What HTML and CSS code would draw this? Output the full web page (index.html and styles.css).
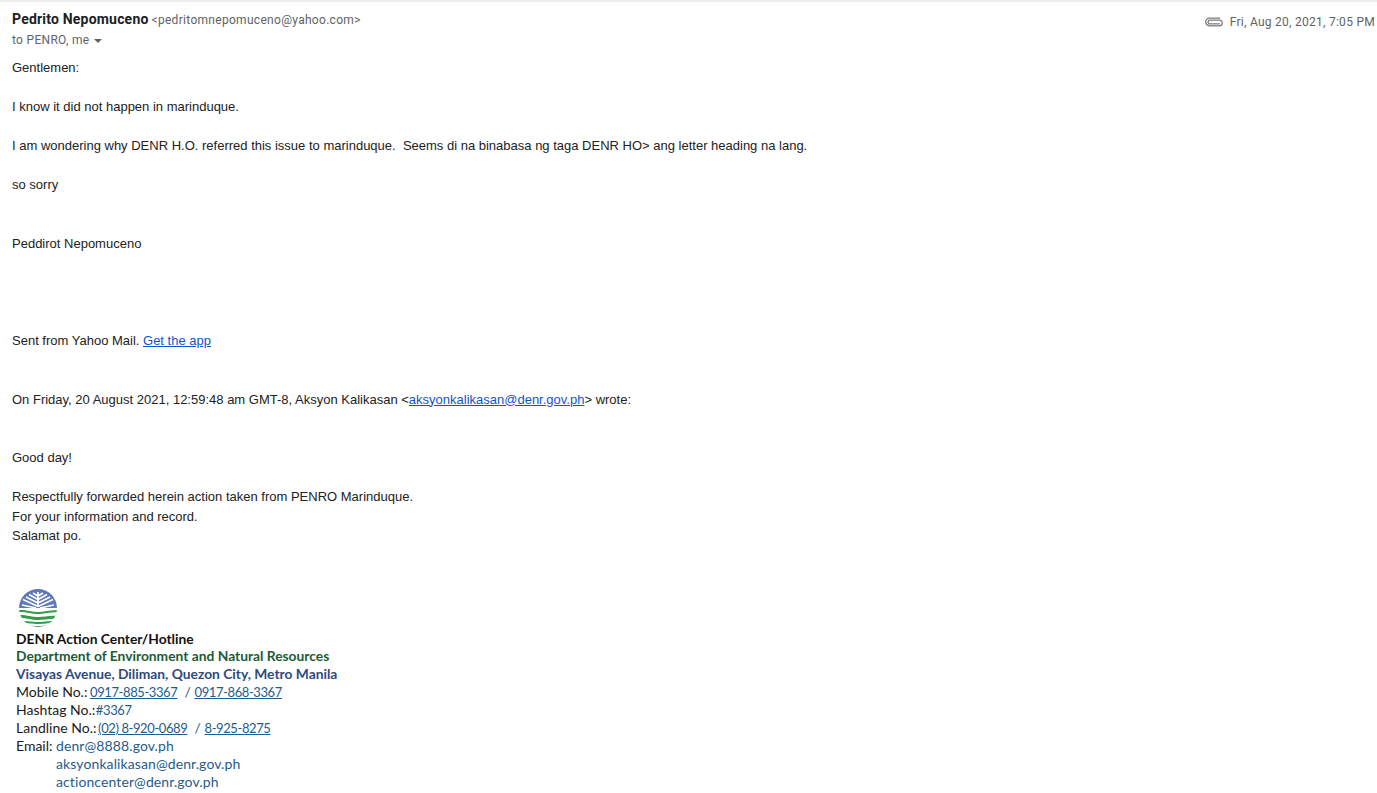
FILE: index.html
```html
<!DOCTYPE html>
<html lang="en">
<head>
<meta charset="utf-8">
<title>Email</title>
<link rel="stylesheet" href="styles.css">
</head>
<body>
<div class="top-shadow"></div>
<header class="head">
  <div class="who">
    <div class="from"><span class="name">Pedrito Nepomuceno</span> <span class="addr">&lt;pedritomnepomuceno@yahoo.com&gt;</span></div>
    <div class="to">to PENRO, me <span class="caret"></span></div>
  </div>
  <div class="meta">
    <svg class="clip" width="18" height="10" viewBox="0 0 18 10" fill="none" stroke="#7b7b7b" stroke-width="1.3"><path d="M15 6.900H5a1.900 1.900 0 0 1 0-3.800h9.400a2.900 2.900 0 0 1 0 5.800H4.600A3.900 3.900 0 0 1 4.600 1.100h10.600"/></svg>
    <span>Fri, Aug 20, 2021, 7:05 PM</span>
  </div>
</header>
<main class="body">
  <p>Gentlemen:</p>
  <p class="gap1">I know it did not happen in marinduque.</p>
  <p class="gap1">I am wondering why DENR H.O. referred this issue to marinduque.&nbsp; Seems di na binabasa ng taga DENR HO&gt; ang letter heading na lang.</p>
  <p class="gap1">so sorry</p>
  <p class="gap2">Peddirot Nepomuceno</p>
  <p class="gap4">Sent from Yahoo Mail. <a href="#">Get the app</a></p>
  <p class="gap2">On Friday, 20 August 2021, 12:59:48 am GMT-8, Aksyon Kalikasan &lt;<a href="#">aksyonkalikasan@denr.gov.ph</a>&gt; wrote:</p>
  <p class="gap2">Good day!</p>
  <p class="gap1">Respectfully forwarded herein action taken from PENRO Marinduque.<br>For your information and record.<br>Salamat po.</p>
</main>
<section class="sig">
  <svg class="logo" width="40" height="40" viewBox="0 0 40 40">
    <defs><clipPath id="disc"><circle cx="20" cy="20" r="19"/></clipPath></defs>
    <g clip-path="url(#disc)">
      <rect width="40" height="40" fill="#fff"/>
      <rect width="40" height="20" fill="#6079b6"/>
      <path d="M20 19V4M20 8l-5-3M20 8l5-3M20 11.500l-9-5M20 11.500l9-5M20 15l-12-6M20 15l12-6M20 18.500l-15-7M20 18.500l15-7M18 20l-14-3M22 20l14-3" stroke="#fff" stroke-width="1.700" fill="none"/>
      <path d="M0 22c10 0 14 2 20 2s12-2 20-2v2c-8 0-14 2-20 2S10 24 0 24z" fill="#2f9e48"/>
      <path d="M0 27c10 0 14 2 20 2s12-2 20-1v3c-8-1-14 1-20 1S10 30 0 30z" fill="#2f9e48"/>
      <path d="M3 33c8 0 11 1 17 1s9-1 17-1v2c-8 0-11 1-17 1s-9-1-17-1z" fill="#2f9e48"/>
      <path d="M9 37.500c4 0 7 .5 11 .5s7-.5 11-.5v2H9z" fill="#2f9e48"/>
    </g>
  </svg>
  <div class="sig-line strong">DENR Action Center/Hotline</div>
  <div class="sig-line strong green">Department of Environment and Natural Resources</div>
  <div class="sig-line strong navy">Visayas Avenue, Diliman, Quezon City, Metro Manila</div>
  <div class="sig-line">Mobile No.: <a class="num pull1" href="#">0917-885-3367</a>&nbsp; <span class="blue">/</span> <a class="num" href="#">0917-868-3367</a></div>
  <div class="sig-line">Hashtag No.: <span class="blue num pull3">#3367</span></div>
  <div class="sig-line">Landline No.: <a class="num pull2" href="#">(02) 8-920-0689</a>&nbsp; <span class="blue">/</span> <a class="num" href="#">8-925-8275</a></div>
  <div class="sig-line email"><span class="label">Email:</span><span class="blue">denr@8888.gov.ph</span></div>
  <div class="sig-line email"><span class="label"></span><span class="blue">aksyonkalikasan@denr.gov.ph</span></div>
  <div class="sig-line email"><span class="label"></span><span class="blue">actioncenter@denr.gov.ph</span></div>
</section>
</body>
</html>
```
FILE: styles.css
```css
html, body { margin: 0; padding: 0; background: #fff; overflow: hidden; height: 793px; }
body { font-family: "Liberation Sans", Arial, sans-serif; color: #222; }
.top-shadow { height: 2px; background: #ededed; }
.head { display: flex; justify-content: space-between; padding: 7px 2px 0 12px; font-family: Roboto, sans-serif; height: 47px; box-sizing: border-box; }
.from { line-height: 20px; white-space: nowrap; }
.name { font-size: 14px; font-weight: 700; color: #202124; letter-spacing: 0.2px; }
.addr { font-size: 12px; color: #5f6368; letter-spacing: 0.3px; margin-left: -1px; }
.to { font-size: 12px; line-height: 20px; color: #5f6368; letter-spacing: 0.3px; display: flex; align-items: center; }
.caret { width: 0; height: 0; margin: 2px 0 0 5px; border-left: 4.500px solid transparent; border-right: 4.500px solid transparent; border-top: 4.500px solid #5f6368; }
.meta { display: flex; align-items: center; gap: 7px; height: 24px; padding-top: 1px; font-size: 12px; color: #5f6368; letter-spacing: 0.27px; }
.body { padding: 9px 12px 0; font-size: 13px; line-height: 19.500px; color: #222; }
.body p { margin: 0; }
.gap1 { padding-top: 19.500px; }
.gap2 { padding-top: 39px; }
.gap4 { padding-top: 78px; }
.body a { color: #1155cc; }
.sig { padding: 42px 0 0 16px; font-family: Lato, "Open Sans", sans-serif; font-size: 14px; color: #1a1a1a; }
.logo { display: block; margin: 0 0 2px 2px; }
.sig-line { line-height: 17.900px; height: 17.900px; white-space: nowrap; }
.strong { font-size: 13.800px; font-weight: 700; color: #111; }
.green { color: #1c5c34; }
.navy { color: #2f4a7c; }
.blue { color: #1f5c8c; }
.sig a { color: #1f5c8c; }
.num { font-size: 13px; letter-spacing: -0.4px; }
.pull1 { margin-left: -1px; }
.pull2 { margin-left: -2px; }
.pull3 { margin-left: -3px; }
.email { display: flex; }
.email .blue { letter-spacing: 0.1px; }
.label { width: 40px; }
```
